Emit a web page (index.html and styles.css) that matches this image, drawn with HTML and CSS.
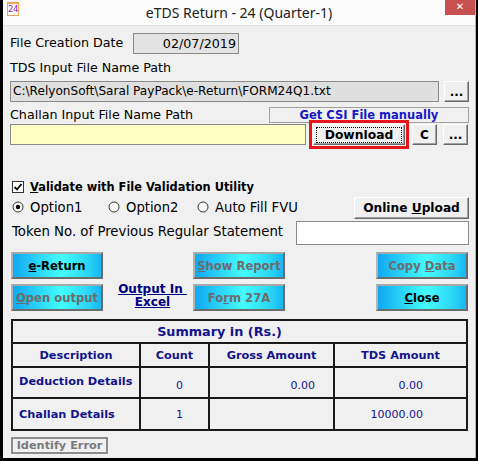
FILE: index.html
```html
<!DOCTYPE html>
<html lang="en">

<head>
    <meta charset="UTF-8">
    <title>eTDS Return - 24 (Quarter-1)</title>
    <link rel="stylesheet" href="styles.css">
</head>

<body>
    <div class="window">
        <div class="inner">
            <div class="titlebar">
                <div class="title-icon"><span class="appicon">24</span></div>
                <div class="title">eTDS Return - 24 (Quarter-1)</div>
                <div class="title-close"><span class="close-btn">&#x2715;</span></div>
            </div>

            <div class="content">
                <div class="row row-date">
                    <span class="label label-date">File Creation Date</span>
                    <span class="field field-date">02/07/2019</span>
                </div>

                <div class="label label-block">TDS Input File Name Path</div>
                <div class="row row-path">
                    <span class="field field-path">C:\RelyonSoft\Saral PayPack\e-Return\FORM24Q1.txt</span>
                    <button class="btn btn-small">...</button>
                </div>

                <div class="row row-challan-label">
                    <span class="label">Challan Input File Name Path</span>
                    <span class="csi-box">Get CSI File manually</span>
                </div>
                <div class="row row-challan">
                    <span class="field field-challan"></span>
                    <span class="highlight">
                        <button class="btn btn-download"><span class="focus-rect">Download</span></button>
                    </span>
                    <button class="btn btn-small btn-c">C</button>
                    <button class="btn btn-small btn-dots">...</button>
                </div>

                <div class="row row-validate">
                    <svg class="checkbox" width="12" height="12" viewBox="0 0 12 12">
                        <rect x="0.5" y="0.5" width="11" height="11" fill="#fff" stroke="#333" />
                        <path d="M2.5 6 L5 8.5 L9.5 3" fill="none" stroke="#000" stroke-width="1.8" />
                    </svg>
                    <span class="validate-text"><u>V</u>alidate with File Validation Utility</span>
                </div>

                <div class="row row-options">
                    <span class="option option-1">
                        <svg class="radio" width="12" height="12" viewBox="0 0 12 12">
                            <circle cx="6" cy="6" r="5" fill="#fff" stroke="#333" />
                            <circle cx="6" cy="6" r="2.2" fill="#000" />
                        </svg>
                        Option1
                    </span>
                    <span class="option option-2">
                        <svg class="radio" width="12" height="12" viewBox="0 0 12 12">
                            <circle cx="6" cy="6" r="5" fill="#fff" stroke="#333" />
                        </svg>
                        Option2
                    </span>
                    <span class="option">
                        <svg class="radio" width="12" height="12" viewBox="0 0 12 12">
                            <circle cx="6" cy="6" r="5" fill="#fff" stroke="#333" />
                        </svg>
                        Auto Fill FVU
                    </span>
                    <button class="btn btn-upload">Online <u>U</u>pload</button>
                </div>

                <div class="row row-token">
                    <span class="label token-label">Token No. of Previous Regular Statement</span>
                    <span class="field field-token"></span>
                </div>

                <div class="actions">
                    <button class="cyan-btn"><u>e</u>-Return</button>
                    <span class="spacer"></span>
                    <button class="cyan-btn disabled"><u>S</u>how Report</button>
                    <span class="spacer"></span>
                    <button class="cyan-btn disabled">Copy <u>D</u>ata</button>

                    <button class="cyan-btn disabled"><u>O</u>pen output</button>
                    <a class="excel-link" href="#">Output In&nbsp;<br>Excel</a>
                    <button class="cyan-btn disabled">Fo<u>r</u>m 27A</button>
                    <span class="spacer"></span>
                    <button class="cyan-btn"><u>C</u>lose</button>
                </div>

                <table class="summary">
                    <colgroup>
                        <col class="col-desc">
                        <col class="col-count">
                        <col class="col-gross">
                        <col class="col-tds">
                    </colgroup>
                    <tr class="summary-title">
                        <th colspan="4">Summary in (Rs.)</th>
                    </tr>
                    <tr class="summary-head">
                        <th>Description</th>
                        <th class="head-count">Count</th>
                        <th class="head-gross">Gross Amount</th>
                        <th class="head-tds">TDS Amount</th>
                    </tr>
                    <tr class="row-deduction">
                        <td class="desc">Deduction Details</td>
                        <td class="count">0</td>
                        <td class="amount gross">0.00</td>
                        <td class="amount tds">0.00</td>
                    </tr>
                    <tr class="row-challan-sum">
                        <td class="desc">Challan Details</td>
                        <td class="count">1</td>
                        <td class="amount gross"></td>
                        <td class="amount tds">10000.00</td>
                    </tr>
                </table>

                <button class="btn-identify">Identify Error</button>
            </div>
        </div>
    </div>
</body>

</html>
```

FILE: styles.css
```css
body {
    margin: 0;
    background-color: #000;
    font-family: "DejaVu Sans", Verdana, sans-serif;
    font-size: 12.7px;
    color: #000;
}

.window {
    width: 478px;
    height: 461px;
    box-sizing: border-box;
    border-left: 3px solid #000;
    border-right: 2px solid #000;
    border-bottom: 3px solid #000;
    background-color: #f0f0f0;
    overflow: hidden;
}

.inner {
    height: 100%;
    border-right: 1px solid #b4b4b4;
}

/* Title bar */
.titlebar {
    height: 25px;
    background-color: #fbfbfb;
    border-bottom: 1px solid #e2e2e2;
    display: grid;
    grid-template-columns: 40px 1fr 40px;
}

.title-icon {
    padding: 2px 0 0 4px;
}

.appicon {
    display: block;
    width: 10px;
    height: 11px;
    border: 1px solid #f0a45a;
    border-top-width: 2px;
    font-family: "DejaVu Sans", sans-serif;
    font-size: 8.5px;
    line-height: 11px;
    letter-spacing: -0.5px;
    color: #8a1aa0;
    text-align: center;
    background-color: #fff;
}

.title {
    font-family: "Noto Sans", "Open Sans", sans-serif;
    font-size: 14px;
    line-height: 25px;
    text-align: center;
    color: #222;
}

.title-close {
    display: flex;
    justify-content: flex-end;
    align-items: flex-start;
}

.close-btn {
    width: 30px;
    height: 15px;
    background-color: #c75050;
    color: #fff;
    font-size: 10px;
    font-weight: bold;
    line-height: 14px;
    text-align: center;
}

/* Form body */
.content {
    padding: 0 6px 0 7px;
}

.row {
    display: flex;
    align-items: center;
}

.label {
    white-space: nowrap;
}

.field {
    box-sizing: border-box;
    border: 1px solid #8a8a8a;
    height: 21px;
    line-height: 19px;
    white-space: nowrap;
    overflow: hidden;
}

.row-date {
    margin-top: 7px;
    height: 21px;
}

.label-date {
    width: 123px;
    margin-top: -3px;
}

.field-date {
    width: 106px;
    background-color: #e3e3e3;
    text-align: right;
    padding-right: 2px;
}

.label-block {
    margin-top: 6px;
    height: 16px;
    line-height: 16px;
}

.row-path {
    margin-top: 5px;
    height: 21px;
    gap: 5px;
}

.field-path {
    flex: 1;
    background-color: #dfdfdf;
    padding-left: 2px;
    font-size: 12.1px;
}

.btn {
    box-sizing: border-box;
    font-family: "DejaVu Sans", Verdana, sans-serif;
    font-weight: bold;
    background-color: #f0f0f0;
    border: 1px solid;
    border-color: #fff #696969 #696969 #fff;
    box-shadow: inset -1px -1px #a0a0a0;
    padding: 0;
    color: #000;
}

.btn-small {
    width: 25px;
    height: 21px;
    font-size: 12px;
    line-height: 16px;
}

.row-challan-label {
    margin-top: 4px;
    height: 16px;
    justify-content: space-between;
}

.csi-box {
    box-sizing: border-box;
    width: 200px;
    height: 16px;
    margin-top: 1px;
    border: 1px solid #a0a0a0;
    font-size: 11.5px;
    font-weight: bold;
    line-height: 14px;
    color: #1717c8;
    text-align: center;
}

.row-challan {
    margin-top: 2px;
    height: 21px;
}

.field-challan {
    width: 296px;
    background-color: #ffffc4;
}

.highlight {
    position: relative;
    margin-left: 7px;
}

.highlight::after {
    content: "";
    position: absolute;
    top: -4px;
    left: -4px;
    right: -4px;
    bottom: -4px;
    border: 3px solid #e8141b;
    pointer-events: none;
}

.btn-download {
    display: block;
    width: 92px;
    height: 21px;
    font-size: 12.3px;
    padding: 2px;
}

.focus-rect {
    display: block;
    border: 1px dotted #000;
    line-height: 14px;
}

.btn-c {
    margin-left: 7px;
}

.btn-dots {
    margin-left: 6px;
}

.row-validate {
    margin-top: 35px;
    height: 14px;
}

.checkbox {
    margin-left: 2px;
    margin-right: 6px;
}

.validate-text {
    font-weight: bold;
    font-size: 11.4px;
}

.row-options {
    margin-top: 3px;
    height: 22px;
    align-items: flex-start;
}

.option {
    display: flex;
    align-items: center;
    gap: 6px;
    height: 14px;
    margin-top: 3px;
    font-size: 13.2px;
    white-space: nowrap;
}

.option-1 {
    margin-left: 2px;
    width: 96px;
}

.option-2 {
    width: 89px;
}

.btn-upload {
    margin-left: auto;
    margin-top: 0;
    width: 115px;
    height: 22px;
    font-size: 12.2px;
}

.row-token {
    margin-top: 2px;
    height: 24px;
}

.token-label {
    margin-left: 2px;
    margin-top: -3px;
    font-size: 13.3px;
}

.field-token {
    margin-left: auto;
    width: 173px;
    height: 24px;
    background-color: #fff;
}

/* Action buttons */
.actions {
    margin: 7px 0 0 1px;
    display: grid;
    grid-template-columns: 92px 90px 92px 91px 92px;
    grid-auto-rows: 27px;
    row-gap: 5px;
}

.cyan-btn {
    font-family: "DejaVu Sans", Verdana, sans-serif;
    font-size: 11.6px;
    font-weight: bold;
    color: #000;
    padding: 0;
    border: 2px solid;
    border-color: #a8a8a8 #6c6c6c #6c6c6c #b4b4b4;
    background: linear-gradient(90deg, #12a8f2 0%, #30def9 35%, #44fbfb 55%, #2cd6f6 85%, #16b6f2 100%);
}

.cyan-btn.disabled {
    color: #6d6d6d;
}

.excel-link {
    align-self: center;
    margin-top: -4px;
    text-align: center;
    font-size: 12px;
    font-weight: bold;
    line-height: 13px;
    color: #000080;
    padding-left: 9px;
}

/* Summary table */
.summary {
    margin: 8px 0 0 1px;
    width: 457px;
    table-layout: fixed;
    border-collapse: collapse;
    color: #14148a;
}

.col-desc {
    width: 128px;
}

.col-count {
    width: 69px;
}

.col-gross {
    width: 125px;
}

.summary th,
.summary td {
    border: 2px solid #1a1a1a;
    padding: 0;
    white-space: nowrap;
}

.summary th {
    font-size: 11.3px;
    font-weight: bold;
}

.summary-title {
    height: 23px;
}

.summary-title th {
    font-size: 12.8px;
    padding-right: 40px;
}

.summary-head {
    height: 24px;
}

.head-count {
    padding-left: 2px;
    padding-right: 6px;
}

.head-gross {
    padding-bottom: 4px;
    padding-left: 4px;
}

.head-tds {
    padding-right: 20px;
}

.row-deduction {
    height: 31px;
}

.row-challan-sum {
    height: 32px;
}

.desc {
    font-size: 11.3px;
    font-weight: bold;
    padding-left: 6px !important;
}

.row-deduction .desc {
    padding-bottom: 3px !important;
}

.count {
    text-align: center;
    font-size: 11px;
    padding-left: 10px !important;
}

.amount {
    text-align: right;
    font-size: 11px;
}

.gross {
    padding-right: 18px !important;
}

.tds {
    padding-right: 43px !important;
}

.row-deduction .amount,
.row-deduction .count {
    padding-top: 6px !important;
}

.btn-identify {
    display: block;
    margin: 6px 0 0 1px;
    width: 97px;
    height: 17px;
    padding: 0;
    font-family: "DejaVu Sans", Verdana, sans-serif;
    font-size: 11.3px;
    font-weight: bold;
    line-height: 13px;
    color: #7a7a7a;
    background-color: #f0f0f0;
    border: 2px solid #8c8c8c;
}
```
